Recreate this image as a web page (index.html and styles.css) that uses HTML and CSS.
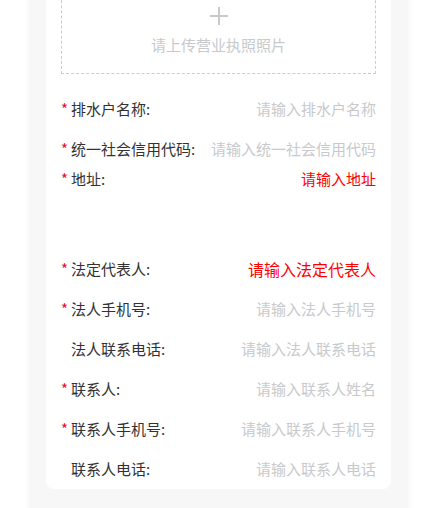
FILE: index.html
```html
<!DOCTYPE html>
<html lang="zh-CN">
<head>
    <meta charset="UTF-8">
    <meta name="viewport" content="width=device-width, initial-scale=1.0">
    <title>排水户信息</title>
    <link rel="stylesheet" href="styles.css">
</head>
<body>
    <div class="page">
        <div class="card">
            <div class="upload">
                <svg class="plus" width="20" height="20" viewBox="0 0 20 20">
                    <path d="M10 1v18M1 10h18" stroke="#c8c9cc" stroke-width="2" fill="none"/>
                </svg>
                <span class="upload-text">请上传营业执照照片</span>
            </div>

            <div class="field">
                <span class="label required">排水户名称:</span>
                <span class="value">请输入排水户名称</span>
            </div>
            <div class="field">
                <span class="label required">统一社会信用代码:</span>
                <span class="value">请输入统一社会信用代码</span>
            </div>
            <div class="field field-area">
                <span class="label required">地址:</span>
                <span class="value error">请输入地址</span>
            </div>
            <div class="field">
                <span class="label required">法定代表人:</span>
                <span class="value error big">请输入法定代表人</span>
            </div>
            <div class="field">
                <span class="label required">法人手机号:</span>
                <span class="value">请输入法人手机号</span>
            </div>
            <div class="field">
                <span class="label">法人联系电话:</span>
                <span class="value">请输入法人联系电话</span>
            </div>
            <div class="field">
                <span class="label required">联系人:</span>
                <span class="value">请输入联系人姓名</span>
            </div>
            <div class="field">
                <span class="label required">联系人手机号:</span>
                <span class="value">请输入联系人手机号</span>
            </div>
            <div class="field">
                <span class="label">联系人电话:</span>
                <span class="value">请输入联系人电话</span>
            </div>
        </div>
    </div>
</body>
</html>
```

FILE: styles.css
```css
body {
    margin: 0;
    background-color: #fff;
    font-family: "Noto Sans CJK SC", "Noto Sans", sans-serif;
    overflow: hidden;
}
.page {
    width: 375px;
    margin-left: 31px;
    margin-top: -40px;
    min-height: 560px;
    background-color: #f7f7f7;
    box-shadow: 0 0 8px rgba(0, 0, 0, 0.08);
}
.card {
    margin: 0 15px;
    padding: 10px 15px 0;
    background-color: #fff;
    border-radius: 0 0 8px 8px;
}
.upload {
    height: 104px;
    border: 1px dashed #ccc;
    display: flex;
    flex-direction: column;
    align-items: center;
    padding-top: 35px;
    box-sizing: border-box;
    margin-bottom: 15px;
}
.plus {
    display: block;
}
.upload-text {
    margin-top: 9px;
    font-size: 15px;
    line-height: 20px;
    color: #c8c9cc;
}
.field {
    display: flex;
    justify-content: space-between;
    align-items: center;
    height: 40px;
    font-size: 15px;
    line-height: 20px;
}
.field-area {
    height: 80px;
    align-items: flex-start;
}
.label {
    color: #323233;
    padding-left: 10px;
    white-space: nowrap;
}
.label.required {
    padding-left: 0;
}
.label.required::before {
    content: "*";
    display: inline-block;
    width: 10px;
    color: #ee0a24;
}
.value {
    color: #c8c9cc;
    text-align: right;
    white-space: nowrap;
}
.value.error {
    color: #f00;
}
.value.big {
    font-size: 16px;
}
```
